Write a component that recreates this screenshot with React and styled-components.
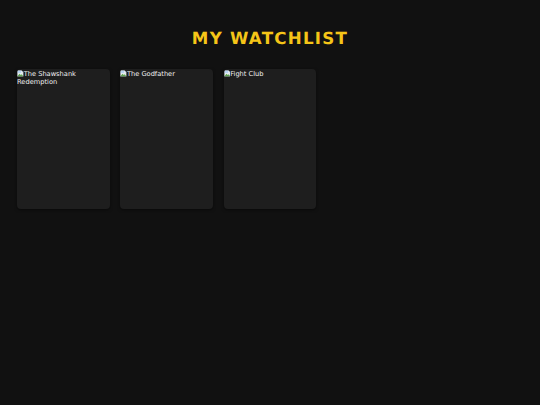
import styled, { createGlobalStyle } from 'styled-components';

const GlobalStyle = createGlobalStyle`
    html, body {
        margin: 0;
        padding: 0;
        background: #111111;
    }
`;

const Page = styled.div`
    min-height: 405px;
    padding: 29px 17px 0;
    box-sizing: border-box;
    font-family: "DejaVu Sans", Verdana, sans-serif;
    text-rendering: geometricPrecision;
    background: #111111;
`;

const Titulo = styled.h1`
    margin: 0 0 20px;
    color: #f5c518;
    font-size: 16.67px;
    line-height: 20px;
    font-weight: 700;
    letter-spacing: 1.25px;
    text-align: center;
`;

const Lista = styled.div`
    display: grid;
    grid-template-columns: repeat(5, 1fr);
    gap: 10.4px;
`;

const Card = styled.div`
    height: 140px;
    padding-top: 1px;
    box-sizing: border-box;
    background: #1e1e1e;
    border-radius: 4px;
    box-shadow: 0 1px 3px rgba(0, 0, 0, 0.5);
    overflow: hidden;
    color: #f2f2f2;
    font-size: 6.67px;
    line-height: 7.8px;
`;

const IconeQuebrado = styled.svg`
    width: 6.67px;
    height: 6.67px;
    vertical-align: -0.5px;
`;

function ImagemQuebrada() {
    return (
        <IconeQuebrado viewBox="0 0 16 16">
            <path d="M1 1h10l4 4v10H1z" fill="#e8eef2" stroke="#9aa0a6" />
            <path d="M1 15l5-6 3 3 2-2 4 5z" fill="#5fa34f" />
            <path d="M2 2h8v5H2z" fill="#b9d4f5" />
        </IconeQuebrado>
    );
}

const filmes = ['The Shawshank Redemption', 'The Godfather', 'Fight Club'];

export default function App() {
    return (
        <Page>
            <GlobalStyle />
            <Titulo>MY WATCHLIST</Titulo>
            <Lista>
                {filmes.map(filme => (
                    <Card key={filme}>
                        <ImagemQuebrada />
                        {filme}
                    </Card>
                ))}
            </Lista>
        </Page>
    );
}
